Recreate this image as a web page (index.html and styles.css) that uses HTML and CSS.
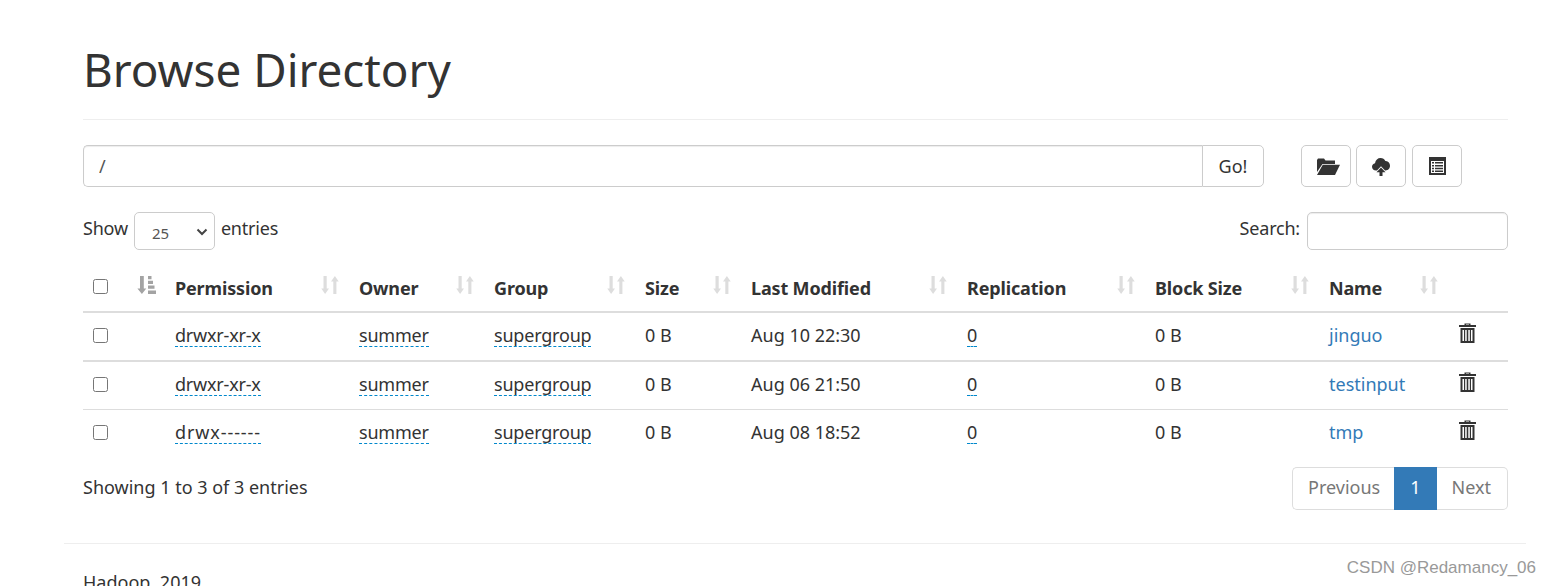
FILE: index.html
```html
<!DOCTYPE html>
<html lang="en">
<head>
<meta charset="utf-8">
<title>Browse Directory</title>
<link rel="stylesheet" href="styles.css">
</head>
<body>
<svg class="sprites" width="0" height="0" aria-hidden="true">
  <symbol id="sort" viewBox="0 0 18 18"><path d="M2.500 0h3.200v12.500H8L4.100 18 .3 12.500h2.200zM10 5.500L13.900 0l3.800 5.500h-2.300V18h-3.100V5.500z"/></symbol>
  <symbol id="trash" viewBox="0 0 17 20"><path fill-rule="evenodd" d="M5.500 2V.5h6V2H17v2H0V2zM7 2h3v-.4H7zM1.500 5h14v15h-14zM3.500 7v11H5V7zM6.200 7v11h1.500V7zM9.300 7v11h1.500V7zM12 7v11h1.500V7z"/></symbol>
</svg>
<div class="container">
  <main class="content">
    <header class="page-header"><h1>Browse Directory</h1></header>
    <div class="toolbar">
      <div class="path-group">
        <input class="path-input" type="text" value="/">
        <button class="go-btn">Go!</button>
      </div>
      <div class="actions">
        <button class="icon-btn" aria-label="Create directory"><svg class="folder" width="23" height="17" viewBox="0 0 23 17"><path d="M0 14V2L1 .5h6L8.500 2.500H18V6H5.500zM5.800 6.800H23L18 17H0z"/></svg></button>
        <button class="icon-btn" aria-label="Upload"><svg width="18" height="19" viewBox="0 0 18 19"><path d="M4 13.500C1.800 13.500 0 12 0 9.800c0-1.900 1.300-3.300 3-3.600C3.500 3 5.800 1 8.500 1c2.200 0 4 1.100 4.900 3 2.700-.3 4.600 2 4.600 4.800 0 2.600-1.900 4.700-4.400 4.700H13L9 9.200 5 13.500zM9 10.500l4.500 4.800h-3V19h-3v-3.700h-3z"/></svg></button>
        <button class="icon-btn" aria-label="Cut and paste"><svg width="17" height="18" viewBox="0 0 17 18"><path fill-rule="evenodd" d="M0 0h17v18H0zM2 4v12h13V4zM3 5h2v1.500H3zM6 5h8v1.500H6zM3 8h2v1.500H3zM6 8h8v1.500H6zM3 10.800h2v1.500H3zM6 10.800h8v1.500H6zM3 13.500h2V15H3zM6 13.500h8V15H6z"/></svg></button>
      </div>
    </div>
    <div class="table-controls">
      <label class="length">
        <span class="lbl">Show</span>
        <span class="select-wrap">
          <select class="length-select"><option>25</option></select>
          <svg class="chevron" width="12" height="8" viewBox="0 0 12 8"><path d="M1.500 1.500L6 6l4.500-4.500" fill="none" stroke="#444" stroke-width="2"/></svg>
        </span>
        <span class="lbl">entries</span>
      </label>
      <label class="search"><span class="lbl">Search:</span> <input class="search-input" type="search"></label>
    </div>
    <table class="listing">
      <colgroup>
        <col class="c-check"><col class="c-sort"><col class="c-perm"><col class="c-owner"><col class="c-group"><col class="c-size"><col class="c-mod"><col class="c-rep"><col class="c-block"><col class="c-name"><col class="c-del">
      </colgroup>
      <thead>
        <tr>
          <th><input class="check" type="checkbox"></th>
          <th class="sorted"><svg class="sort-icon" viewBox="0 0 19 18"><path d="M3 0h3.800v12.500h2.500L4.900 18 .4 12.500H3zM11 0h3.500v3.200H11zM11 4.800h5v3.200h-5zM11 9.600h6.500v3.200H11zM11 14.400h8V18h-8z"/></svg></th>
          <th>Permission<svg class="sort-icon right"><use href="#sort"/></svg></th>
          <th>Owner<svg class="sort-icon right"><use href="#sort"/></svg></th>
          <th>Group<svg class="sort-icon right"><use href="#sort"/></svg></th>
          <th>Size<svg class="sort-icon right"><use href="#sort"/></svg></th>
          <th>Last Modified<svg class="sort-icon right"><use href="#sort"/></svg></th>
          <th>Replication<svg class="sort-icon right"><use href="#sort"/></svg></th>
          <th>Block Size<svg class="sort-icon right"><use href="#sort"/></svg></th>
          <th>Name<svg class="sort-icon right"><use href="#sort"/></svg></th>
          <th></th>
        </tr>
      </thead>
      <tbody>
        <tr class="first">
          <td><input class="check" type="checkbox"></td><td></td>
          <td><span class="editable">drwxr-xr-x</span></td>
          <td><span class="editable">summer</span></td>
          <td><span class="editable">supergroup</span></td>
          <td>0 B</td><td>Aug 10 22:30</td>
          <td><span class="editable">0</span></td>
          <td>0 B</td><td><a href="#">jinguo</a></td>
          <td><svg class="trash"><use href="#trash"/></svg></td>
        </tr>
        <tr class="mid">
          <td><input class="check" type="checkbox"></td><td></td>
          <td><span class="editable">drwxr-xr-x</span></td>
          <td><span class="editable">summer</span></td>
          <td><span class="editable">supergroup</span></td>
          <td>0 B</td><td>Aug 06 21:50</td>
          <td><span class="editable">0</span></td>
          <td>0 B</td><td><a href="#">testinput</a></td>
          <td><svg class="trash"><use href="#trash"/></svg></td>
        </tr>
        <tr class="last">
          <td><input class="check" type="checkbox"></td><td></td>
          <td><span class="editable dashes">drwx------</span></td>
          <td><span class="editable">summer</span></td>
          <td><span class="editable">supergroup</span></td>
          <td>0 B</td><td>Aug 08 18:52</td>
          <td><span class="editable">0</span></td>
          <td>0 B</td><td><a href="#">tmp</a></td>
          <td><svg class="trash"><use href="#trash"/></svg></td>
        </tr>
      </tbody>
    </table>
    <div class="table-footer">
      <div class="info">Showing 1 to 3 of 3 entries</div>
      <nav class="pager">
        <a class="page" href="#">Previous</a><a class="page current" href="#">1</a><a class="page" href="#">Next</a>
      </nav>
    </div>
  </main>
  <hr class="footer-rule">
  <footer class="foot">Hadoop, 2019.</footer>
</div>
<div class="watermark">CSDN @Redamancy_06</div>
</body>
</html>
```

FILE: styles.css
```css
html, body { margin: 0; padding: 0; height: 586px; overflow: hidden; background: #fff; }
body {
  font-family: "Noto Sans", "Open Sans", "Liberation Sans", sans-serif;
  font-size: 18px;
  line-height: 25px;
  color: #333;
  position: relative;
}
.sprites { position: absolute; }
.container { margin: 0 25px 0 64px; }
.content { padding: 0 18px 0 19px; }
.page-header { height: 119px; border-bottom: 1px solid #eee; }
h1 { margin: 0; padding-top: 36px; font-size: 45.8px; line-height: 66px; font-weight: 400; color: #333; }
.toolbar { display: flex; margin-top: 25px; height: 42px; }
.path-group { display: flex; width: 1181px; }
.path-input {
  flex: 1; min-width: 0; box-sizing: border-box; height: 42px; padding: 0 15px;
  font: inherit; color: #555; border: 1px solid #ccc; border-right: 0;
  border-radius: 5px 0 0 5px; box-shadow: inset 0 1px 1px rgba(0,0,0,.075); outline: 0;
}
.go-btn {
  width: 62px; height: 42px; padding: 0; font: inherit; color: #333; background: #fff;
  border: 1px solid #ccc; border-radius: 0 5px 5px 0;
}
.actions { display: flex; margin-left: 37px; gap: 5px; }
.icon-btn {
  width: 50px; height: 42px; padding: 0; background: #fff; border: 1px solid #ccc; border-radius: 5px;
  display: flex; align-items: center; justify-content: center;
}
.icon-btn:last-child { margin-left: 1px; }
.icon-btn svg { fill: #333; display: block; }
.icon-btn .folder { margin-left: 4px; }
.table-controls { display: flex; justify-content: space-between; align-items: flex-start; margin-top: 25px; height: 39px; }
.length, .search { display: flex; align-items: flex-start; }
.lbl { display: block; margin-top: 4px; letter-spacing: -.2px; }
.select-wrap { position: relative; display: block; margin: 0 6px; }
.length-select {
  display: block; width: 81px; height: 38px; box-sizing: border-box; padding: 3px 0 0 17px; appearance: none;
  font: 15px "Noto Sans", sans-serif; color: #555; background: #fff; border: 1px solid #ccc; border-radius: 5px;
}
.chevron { position: absolute; right: 7px; top: 16px; }
.search-input {
  width: 201px; height: 38px; box-sizing: border-box; border: 1px solid #ccc; border-radius: 5px; padding: 0 8px; margin-left: 7px;
  box-shadow: inset 0 1px 1px rgba(0,0,0,.075); outline: 0;
}
.listing { width: 1425px; table-layout: fixed; border-collapse: collapse; margin-top: 17px; }
.c-check { width: 46px; } .c-sort { width: 38px; } .c-perm { width: 184px; } .c-owner { width: 135px; }
.c-group { width: 151px; } .c-size { width: 106px; } .c-mod { width: 216px; } .c-rep { width: 188px; }
.c-block { width: 174px; } .c-name { width: 129px; } .c-del { width: 58px; }
.listing th { position: relative; height: 41px; padding: 0 8px 2px; text-align: left; font-weight: 700; letter-spacing: -.15px; border-bottom: 2px solid #ddd; }
.listing th:first-child { padding: 0 0 0 10px; }
.listing td { box-sizing: border-box; padding: 10px 8px 0; vertical-align: top; }
.listing td:first-child { padding: 15px 0 0 10px; }
.first td { height: 49px; }
.listing .mid td { height: 48px; border-top: 2px solid #ddd; border-bottom: 1px solid #ddd; }
.last td { height: 49px; }
.check { width: 15px; height: 15px; margin: 0; display: block; }
.listing th .check { position: relative; top: -3px; }
.sort-icon { position: absolute; top: 8px; width: 18px; height: 18px; fill: #ddd; }
.sort-icon.right { right: 12px; }
.sorted .sort-icon { left: 8px; top: 8px; width: 19px; height: 18px; fill: #a3a3a3; }
.editable { display: inline-block; line-height: 21px; border-bottom: 1px dashed #08c; letter-spacing: -.2px; }
.editable.dashes { letter-spacing: .9px; }
a { color: #337ab7; text-decoration: none; }
.trash { width: 17px; height: 20px; fill: #333; display: block; margin: 0 0 0 1px; }
.table-footer { display: flex; justify-content: space-between; margin-top: 9px; }
.info { padding-top: 8px; }
.pager { display: flex; height: 43px; }
.page { box-sizing: border-box; padding: 0 14px 0 15px; line-height: 39px; color: #777; border: 1px solid #ddd; background: #fff; }
.page:first-child { border-radius: 5px 0 0 5px; border-right: 0; }
.page:last-child { border-radius: 0 5px 5px 0; border-left: 0; padding: 0 16px 0 15px; }
.page.current { color: #fff; background: #337ab7; border-color: #337ab7; padding: 0 15px; }
.footer-rule { margin: 33px 0 0; border: 0; border-top: 1px solid #eee; }
.foot { margin: 26px 0 0 19px; }
.watermark { position: absolute; right: 15px; top: 557px; font: 17px/22px "Liberation Sans", sans-serif; color: #999; }
```
